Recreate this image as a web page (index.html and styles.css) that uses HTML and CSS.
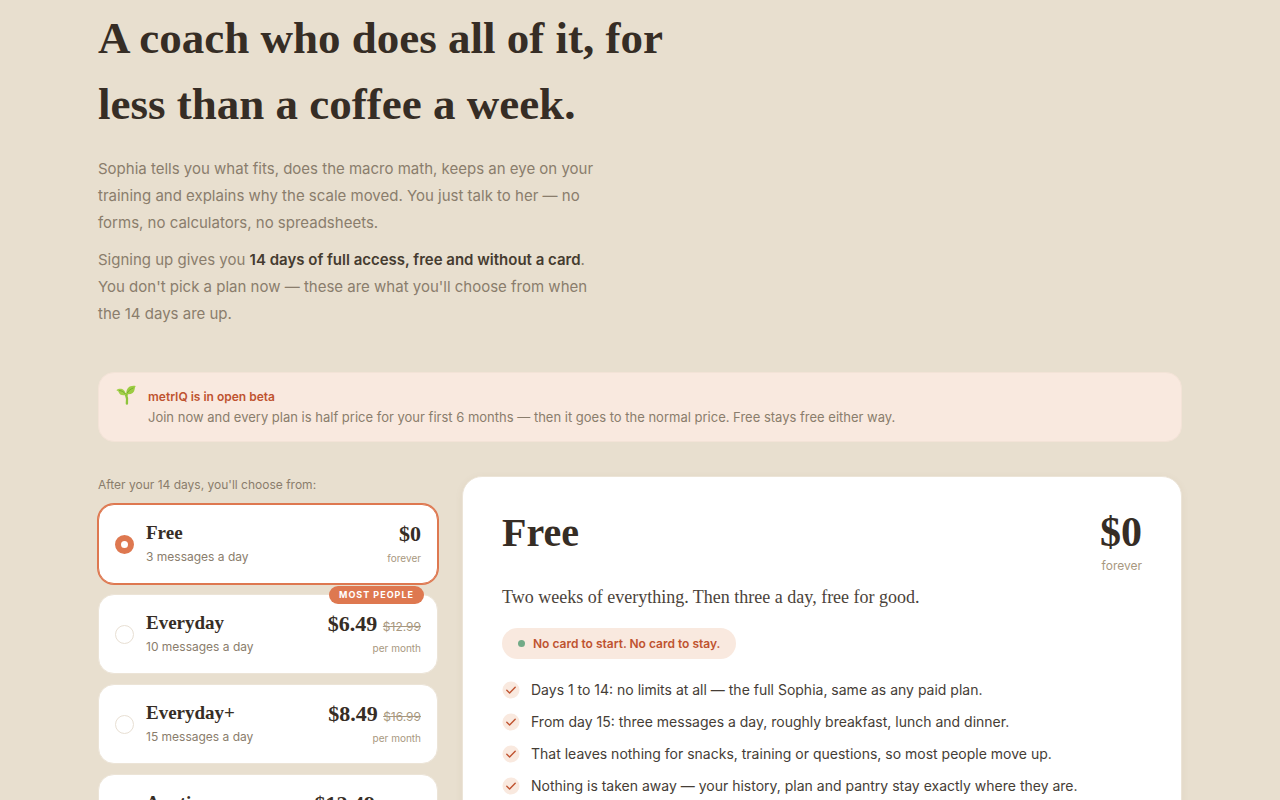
FILE: index.html
```html
<!DOCTYPE html>
<html lang="en">
<head>
<meta charset="utf-8">
<meta name="viewport" content="width=device-width, initial-scale=1">
<title>metrIQ pricing</title>
<link rel="stylesheet" href="styles.css">
</head>
<body>
<main class="page">
  <header class="intro">
    <h1 class="title">A coach who does all of it, for<br>less than a coffee a week.</h1>
    <div class="lead">
      <p>Sophia tells you what fits, does the macro math, keeps an eye on your<br>training and explains why the scale moved. You just talk to her — no<br>forms, no calculators, no spreadsheets.</p>
      <p>Signing up gives you <strong>14 days of full access, free and without a card</strong>.<br>You don't pick a plan now — these are what you'll choose from when<br>the 14 days are up.</p>
    </div>
  </header>

  <section class="beta">
    <svg class="sprout" viewBox="0 0 20 20" aria-hidden="true">
      <path d="M10.900 18.500C11.500 14.500 11 11.600 9.900 9.200" fill="none" stroke="#8fc43c" stroke-width="2.400" stroke-linecap="round"/>
      <path d="M10.500 11C10.700 9 11.500 7.600 13 6.500" fill="none" stroke="#8fc43c" stroke-width="1.600"/>
      <path d="M.3 5.200C3.500 2.500 9.200 3.400 10 10 6 11 3.300 9.600 2.600 7 2.200 5.900 1.200 5.600.3 5.200Z" fill="#a3d04a"/>
      <path d="M19.700.9C13.800-.2 9.900 3 10.400 9 15 9.600 18.200 8.200 18.600 4.400 18.700 3 19.200 1.900 19.700.9Z" fill="#9ccc42"/>
      <path d="M3 5.500C6 5.700 8 7 9.300 9M17.500 2.900C14.500 4 12.500 5.700 11.200 8" fill="none" stroke="#6fa32c" stroke-width=".8"/>
    </svg>
    <div class="beta-body">
      <h2 class="beta-title">metrIQ is in open beta</h2>
      <p class="beta-text">Join now and every plan is half price for your first 6 months — then it goes to the normal price. Free stays free either way.</p>
    </div>
  </section>

  <div class="plans">
    <fieldset class="chooser">
      <legend class="legend">After your 14 days, you'll choose from:</legend>
      <div class="options">
        <label class="option">
          <input class="radio" type="radio" name="plan" checked>
          <span class="about"><span class="name">Free</span><span class="quota">3 messages a day</span></span>
          <span class="cost"><span class="price">$0</span><span class="period">forever</span></span>
        </label>
        <label class="option">
          <span class="badge">MOST PEOPLE</span>
          <input class="radio" type="radio" name="plan">
          <span class="about"><span class="name">Everyday</span><span class="quota">10 messages a day</span></span>
          <span class="cost"><span class="price">$6.49 <s class="was">$12.99</s></span><span class="period">per month</span></span>
        </label>
        <label class="option">
          <input class="radio" type="radio" name="plan">
          <span class="about"><span class="name">Everyday+</span><span class="quota">15 messages a day</span></span>
          <span class="cost"><span class="price">$8.49 <s class="was">$16.99</s></span><span class="period">per month</span></span>
        </label>
        <label class="option">
          <input class="radio" type="radio" name="plan">
          <span class="about"><span class="name">Anytime</span><span class="quota">Unlimited messages</span></span>
          <span class="cost"><span class="price">$12.49 <s class="was">$24.99</s></span><span class="period">per month</span></span>
        </label>
      </div>
    </fieldset>

    <section class="detail">
      <div class="detail-head">
        <h2 class="detail-name">Free</h2>
        <div class="cost">
          <span class="detail-price">$0</span>
          <span class="detail-period">forever</span>
        </div>
      </div>
      <p class="tagline">Two weeks of everything. Then three a day, free for good.</p>
      <p class="pill">No card to start. No card to stay.</p>
      <ul class="features">
        <li><svg class="tick" viewBox="0 0 18 18" aria-hidden="true"><circle cx="9" cy="9" r="8.500"/><path d="M4.800 9.300 7.600 12 13.200 6.300"/></svg>Days 1 to 14: no limits at all — the full Sophia, same as any paid plan.</li>
        <li><svg class="tick" viewBox="0 0 18 18" aria-hidden="true"><circle cx="9" cy="9" r="8.500"/><path d="M4.800 9.300 7.600 12 13.200 6.300"/></svg>From day 15: three messages a day, roughly breakfast, lunch and dinner.</li>
        <li><svg class="tick" viewBox="0 0 18 18" aria-hidden="true"><circle cx="9" cy="9" r="8.500"/><path d="M4.800 9.300 7.600 12 13.200 6.300"/></svg>That leaves nothing for snacks, training or questions, so most people move up.</li>
        <li><svg class="tick" viewBox="0 0 18 18" aria-hidden="true"><circle cx="9" cy="9" r="8.500"/><path d="M4.800 9.300 7.600 12 13.200 6.300"/></svg>Nothing is taken away — your history, plan and pantry stay exactly where they are.</li>
      </ul>
    </section>
  </div>
</main>
</body>
</html>
```
FILE: styles.css
```css
:root {
  --sand: #e8dfcf;
  --ink: #362d25;
  --muted: #8a7d6c;
  --faint: #a89880;
  --accent: #de7850;
  --rust: #bf5330;
  --blush: #f9e9df;
  --edge: #ece4d7;
  --serif: "Liberation Serif", "Noto Sans", serif;
  --sans: Inter, "Liberation Sans", sans-serif;
}

* { box-sizing: border-box; }

body {
  margin: 0;
  height: 100vh;
  overflow: hidden;
  background: var(--sand);
  color: var(--ink);
  font-family: var(--sans);
}

h1, h2, p, ul, fieldset { margin: 0; padding: 0; }

.page {
  max-width: 1124px;
  margin: 0 auto;
  padding: 5px 20px 0;
}

.title {
  font: 700 45px/66px var(--serif);
}

.lead {
  display: grid;
  gap: 10px;
  margin-top: 18px;
  color: var(--muted);
  font-size: 15px;
  line-height: 27px;
}

.lead strong {
  color: #453b2f;
  font-weight: 600;
}

.beta {
  display: flex;
  gap: 12px;
  margin-top: 45px;
  padding: 12px 16px;
  border: 1px solid #f3e3d7;
  border-radius: 16px;
  background: var(--blush);
}

.sprout {
  width: 20px;
  height: 20px;
  flex: none;
  margin-left: 1px;
}

.beta-body {
  padding: 2px 0;
}

.beta-title {
  color: var(--rust);
  font-size: 12px;
  font-weight: 600;
  line-height: 20px;
}

.beta-text {
  color: var(--muted);
  font-size: 13px;
  line-height: 20px;
}

.plans {
  display: grid;
  grid-template-columns: 340px 1fr;
  gap: 24px;
  align-items: start;
  margin-top: 34px;
}

.chooser {
  min-width: 0;
  border: 0;
}

.legend {
  padding: 0;
  color: var(--muted);
  font-size: 12px;
  line-height: 18px;
}

.options {
  display: grid;
  gap: 10px;
  padding-top: 10px;
}

.option {
  position: relative;
  display: flex;
  align-items: center;
  gap: 12px;
  height: 80px;
  padding: 0 16px;
  border: 1px solid var(--edge);
  border-radius: 16px;
  background: #fff;
}

.option:has(:checked) {
  border-color: var(--accent);
  box-shadow: 0 0 0 1px var(--accent);
}

.radio {
  appearance: none;
  width: 19px;
  height: 19px;
  flex: none;
  margin: 0;
  border: 1px solid #e8dfd3;
  border-radius: 50%;
}

.radio:checked {
  border: 6px solid var(--accent);
}

.about {
  display: grid;
  flex: 1;
}

.name {
  font: 700 19px/26px var(--serif);
}

.quota {
  color: var(--muted);
  font-size: 12px;
  line-height: 22px;
}

.cost {
  display: grid;
  text-align: right;
}

.price {
  font: 700 22px/28px var(--serif);
}

.was {
  color: var(--faint);
  font: 400 12px var(--sans);
}

.period {
  color: var(--faint);
  font-size: 10px;
  line-height: 20px;
}

.badge {
  position: absolute;
  top: -9px;
  right: 13px;
  padding: 0 10px;
  border-radius: 9px;
  background: var(--accent);
  color: #fff;
  font-size: 9px;
  font-weight: 700;
  letter-spacing: 1px;
  line-height: 18px;
}

.detail {
  padding: 31px 39px 40px;
  border: 1px solid var(--edge);
  border-radius: 20px;
  background: #fff;
  box-shadow: 0 2px 8px rgb(120 90 50 / 6%);
}

.detail-head {
  display: flex;
  justify-content: space-between;
}

.detail-name {
  font: 700 40px/50px var(--serif);
}

.detail-price {
  font: 700 42px/48px var(--serif);
}

.detail-period {
  color: var(--faint);
  font-size: 12px;
  line-height: 20px;
}

.tagline {
  margin-top: 8px;
  color: #4b433a;
  font: 18px/26px var(--serif);
}

.pill {
  display: inline-flex;
  align-items: center;
  gap: 8px;
  margin-top: 18px;
  padding: 0 16px;
  border-radius: 16px;
  background: var(--blush);
  color: var(--rust);
  font-size: 12px;
  font-weight: 600;
  line-height: 31px;
}

.pill::before {
  width: 7px;
  height: 7px;
  border-radius: 50%;
  background: #72aa87;
  content: "";
}

.features {
  display: grid;
  gap: 10px;
  margin-top: 20px;
  color: #453d36;
  font-size: 14px;
  line-height: 22px;
  list-style: none;
}

.features li {
  display: flex;
  align-items: center;
  gap: 11px;
}

.tick {
  width: 18px;
  height: 18px;
  flex: none;
}

.tick circle { fill: var(--blush); }

.tick path {
  fill: none;
  stroke: var(--rust);
  stroke-width: 1.4;
  stroke-linecap: round;
  stroke-linejoin: round;
}
```
